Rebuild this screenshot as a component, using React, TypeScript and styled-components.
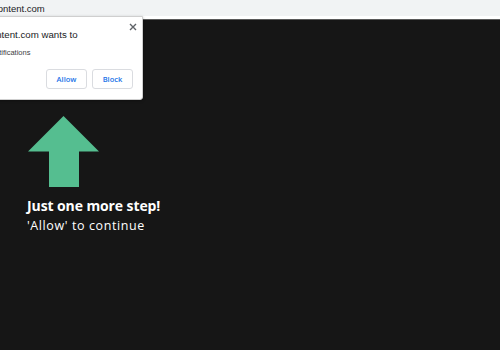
import React from 'react'
import styled, { createGlobalStyle } from 'styled-components'

const GlobalStyle = createGlobalStyle`
  html, body {
    margin: 0;
    padding: 0;
    background: #161616;
    overflow: hidden;
  }
  body {
    font-family: 'Open Sans', 'Liberation Sans', sans-serif;
  }
`

const Page = styled.div`
  position: relative;
  width: 500px;
  height: 350px;
  overflow: hidden;
  background: #161616;
`

const AddressBar = styled.div`
  height: 16px;
  background: #f1f3f4;
  border-bottom: 3px solid #ffffff;
  box-shadow: 0 1px 0 #5a5a5a;
  display: flex;
  align-items: center;
  font-family: 'Liberation Sans', Arial, sans-serif;
  font-size: 9.5px;
  color: #202124;
  white-space: nowrap;
`

const Url = styled.span`
  margin-left: -7px;
`

const Popup = styled.div`
  position: absolute;
  left: -60px;
  top: 16px;
  width: 203px;
  height: 84px;
  box-sizing: border-box;
  background: #ffffff;
  border: 1px solid #cfcfcf;
  border-radius: 0 0 3px 3px;
  box-shadow: 0 1px 3px rgba(0, 0, 0, 0.3);
  padding: 11px 9px 0 45px;
  white-space: nowrap;
  font-family: 'Liberation Sans', Arial, sans-serif;
  display: flex;
  flex-direction: column;
`

const CloseButton = styled.svg`
  position: absolute;
  right: 5px;
  top: 6px;
  width: 8px;
  height: 8px;
`

const Title = styled.div`
  font-size: 9.7px;
  color: #202124;
  line-height: 14px;
`

const Permission = styled.div`
  margin: 6px 0 0 -16px;
  font-size: 7.5px;
  color: #3c4043;
  line-height: 10px;
`

const Buttons = styled.div`
  display: flex;
  justify-content: flex-end;
  gap: 5px;
  margin-top: 11px;
`

const PopupButton = styled.div`
  width: 41px;
  height: 20px;
  box-sizing: border-box;
  border: 1px solid #dadce0;
  border-radius: 3px;
  display: flex;
  align-items: center;
  justify-content: center;
  font-family: 'Open Sans', sans-serif;
  font-size: 7.5px;
  font-weight: 600;
  color: #1a73e8;
`

const Content = styled.div`
  padding: 97px 0 0 27px;
  display: flex;
  flex-direction: column;
`

const Arrow = styled.svg`
  width: 71px;
  height: 71px;
  margin-left: 1px;
`

const Heading = styled.div`
  margin-top: 10px;
  font-size: 14px;
  font-weight: 700;
  color: #ffffff;
  letter-spacing: -0.1px;
  line-height: 18px;
`

const Sub = styled.div`
  margin-top: 3px;
  font-size: 12.5px;
  color: #ffffff;
  letter-spacing: 0.6px;
  line-height: 16px;
`

export default function App() {
  return (
    <Page>
      <GlobalStyle />
      <AddressBar>
        <Url>content.com</Url>
      </AddressBar>
      <Popup>
        <CloseButton viewBox="0 0 8 8">
          <path d="M1 1L7 7M7 1L1 7" stroke="#5f6368" strokeWidth="1.4" />
        </CloseButton>
        <Title>content.com wants to</Title>
        <Permission>Show notifications</Permission>
        <Buttons>
          <PopupButton>Allow</PopupButton>
          <PopupButton>Block</PopupButton>
        </Buttons>
      </Popup>
      <Content>
        <Arrow viewBox="0 0 71 71">
          <polygon points="35.5,0 71,35.5 51,35.5 51,71 21,71 21,35.5 0,35.5" fill="#55be90" />
        </Arrow>
        <Heading>Just one more step!</Heading>
        <Sub>'Allow' to continue</Sub>
      </Content>
    </Page>
  )
}
